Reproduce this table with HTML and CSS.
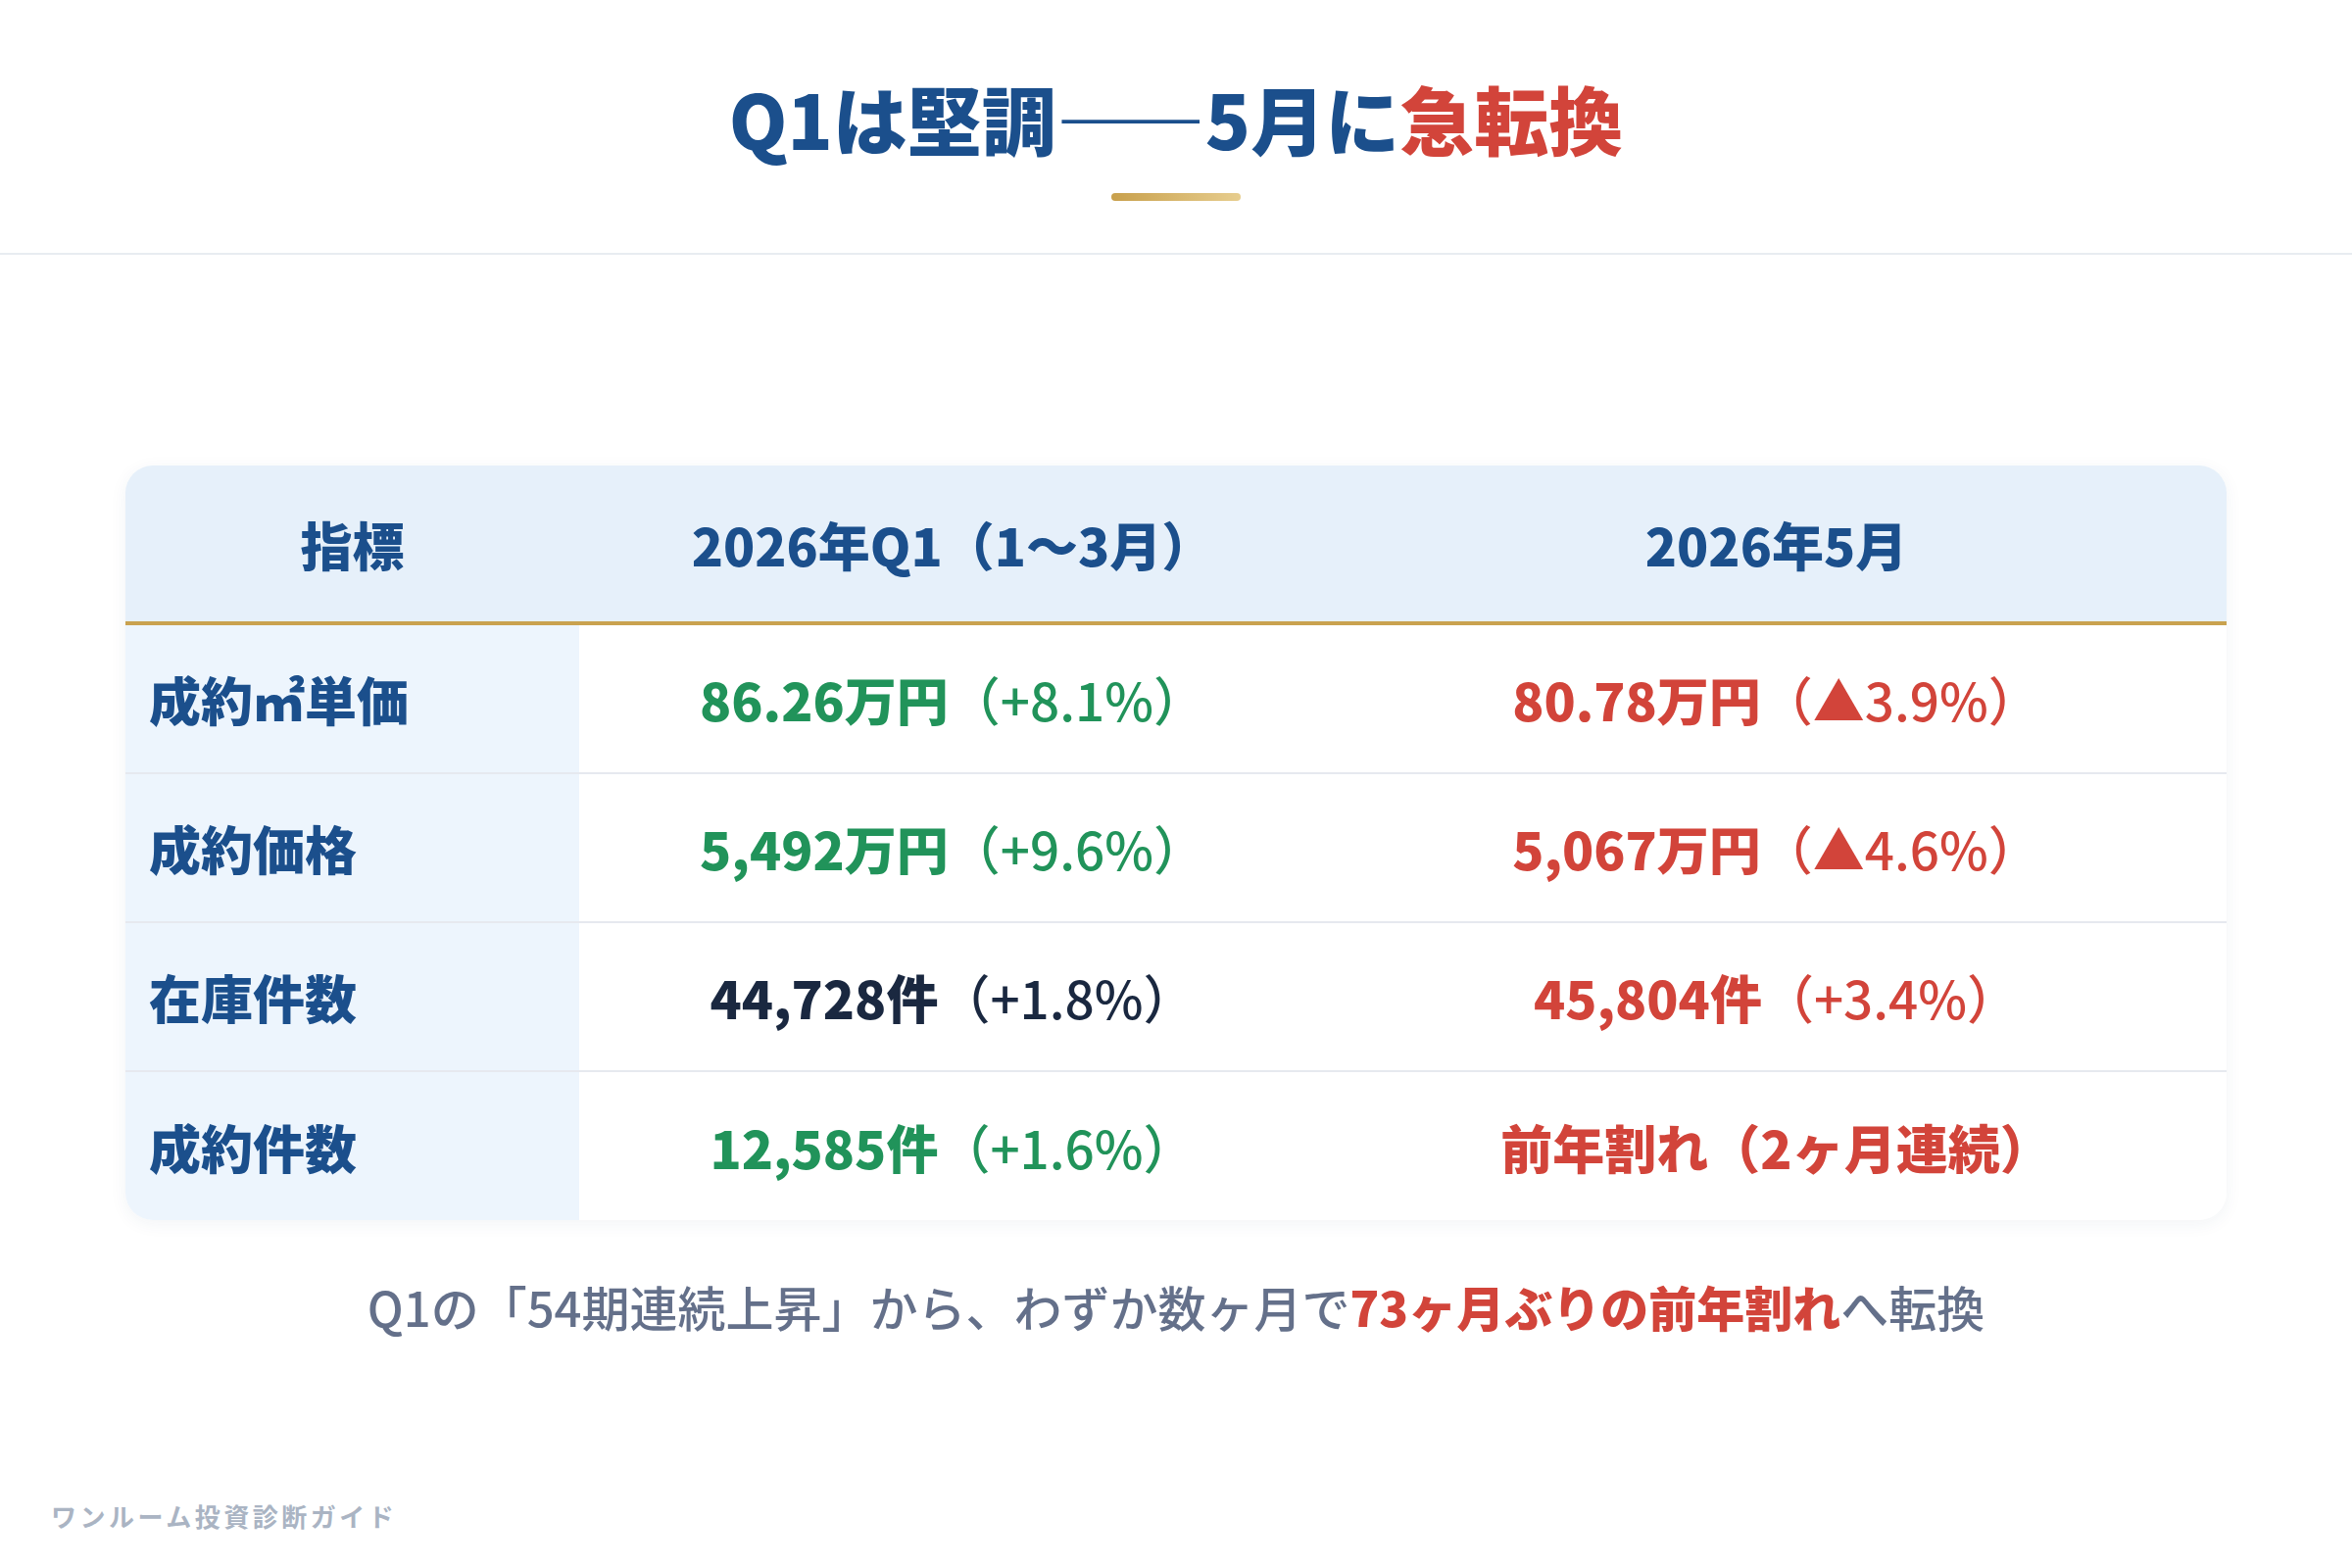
FILE: index.html
```html
<!DOCTYPE html>
<html lang="ja">
<head>
<meta charset="utf-8">
<title>Q1は堅調——5月に急転換</title>
<link rel="stylesheet" href="styles.css">
</head>
<body>
<div class="page">
  <header class="header">
    <h1 class="title">Q1は堅調——5月に<span class="red">急転換</span></h1>
    <div class="accent"></div>
  </header>
  <main class="main">
    <table class="data">
      <colgroup>
        <col class="c1"><col class="c2"><col class="c3">
      </colgroup>
      <thead>
        <tr><th>指標</th><th>2026年Q1（1〜3月）</th><th>2026年5月</th></tr>
      </thead>
      <tbody>
        <tr>
          <td class="label">成約㎡単価</td>
          <td class="val green"><b>86.26万円</b>（+8.1%）</td>
          <td class="val red"><b>80.78万円</b>（▲3.9%）</td>
        </tr>
        <tr>
          <td class="label">成約価格</td>
          <td class="val green"><b>5,492万円</b>（+9.6%）</td>
          <td class="val red"><b>5,067万円</b>（▲4.6%）</td>
        </tr>
        <tr>
          <td class="label">在庫件数</td>
          <td class="val dark"><b>44,728件</b>（+1.8%）</td>
          <td class="val red"><b>45,804件</b>（+3.4%）</td>
        </tr>
        <tr>
          <td class="label">成約件数</td>
          <td class="val green"><b>12,585件</b>（+1.6%）</td>
          <td class="val red"><b>前年割れ（2ヶ月連続）</b></td>
        </tr>
      </tbody>
    </table>
    <p class="summary">Q1の「54期連続上昇」から、わずか数ヶ月で<strong>73ヶ月ぶりの前年割れ</strong>へ転換</p>
  </main>
  <footer class="footer">ワンルーム投資診断ガイド</footer>
</div>
</body>
</html>
```
FILE: styles.css
```css
html, body {
  margin: 0;
  padding: 0;
  background: #ffffff;
}
body {
  font-family: "Noto Sans CJK JP", "Noto Sans", sans-serif;
  color: #1a2840;
}
.page {
  width: 2400px;
  height: 1600px;
  display: flex;
  flex-direction: column;
}
.header {
  height: 260px;
  box-sizing: border-box;
  border-bottom: 2px solid #e8ecf1;
  display: flex;
  flex-direction: column;
  align-items: center;
  padding-top: 74px;
}
.title {
  margin: 0;
  font-size: 76px;
  line-height: 92px;
  font-weight: 900;
  color: #1b4f8c;
  letter-spacing: 0;
}
.title .red {
  color: #d2443a;
}
.accent {
  margin-top: 31px;
  width: 132px;
  height: 8px;
  border-radius: 4px;
  background: linear-gradient(90deg, #c8a04c, #e7cd8e);
}
.main {
  flex: 1;
  display: flex;
  flex-direction: column;
  align-items: center;
  padding-top: 215px;
}
.data {
  width: 2144px;
  table-layout: fixed;
  border-collapse: separate;
  border-spacing: 0;
  border-radius: 28px;
  overflow: hidden;
  box-shadow: 0 4px 18px rgba(30, 60, 100, 0.06);
  font-size: 53px;
}
.c1 { width: 463px; }
.c2 { width: 762px; }
.c3 { width: 919px; }
.data th {
  height: 159px;
  background: #e6f0fa;
  color: #1b4f8c;
  font-weight: 900;
  text-align: center;
  padding: 0;
  border-bottom: 4px solid #c9a24f;
}
.data td {
  height: 150px;
  padding: 0;
  border-bottom: 2px solid #e6e9ef;
  text-align: center;
  background: #ffffff;
}
.data tbody tr:last-child td {
  border-bottom: none;
  height: 151px;
}
.data td.label {
  background: #edf5fd;
  color: #1b4f8c;
  font-weight: 900;
  text-align: left;
  padding-left: 24px;
}
.val {
  font-weight: 500;
}
.val b {
  font-weight: 900;
}
.green { color: #21935a; }
.red { color: #d2443a; }
.dark { color: #1a2840; }
.summary {
  margin: 52px 0 0;
  font-size: 49px;
  line-height: 72px;
  font-weight: 500;
  color: #64708a;
}
.summary strong {
  color: #d2443a;
  font-weight: 900;
}
.footer {
  padding: 0 0 34px 52px;
  font-size: 26px;
  line-height: 39px;
  font-weight: 700;
  letter-spacing: 3.5px;
  color: #aab4c3;
}
```
